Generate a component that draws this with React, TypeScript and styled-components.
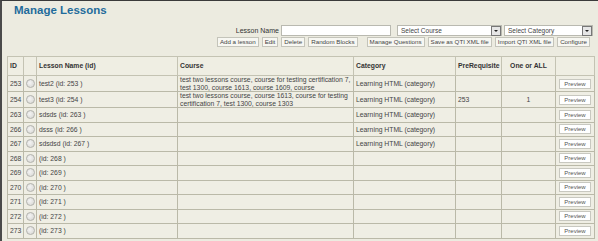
import styled, { createGlobalStyle } from "styled-components";

const Global = createGlobalStyle`
  html, body { margin: 0; padding: 0; background: #ecebe0; }
  body { font-family: "Liberation Sans", Arial, sans-serif; color: #333; }
`;

const Page = styled.div`
  height: 241px;
  box-sizing: border-box;
  border-top: 1px solid #3a3a3a;
  border-left: 2px solid #4a4a4a;
  padding: 0 5px 0 5px;
  overflow: hidden;
`;

const Title = styled.h1`
  margin: 2px 0 0 7px;
  font-size: 11.5px;
  line-height: 15px;
  font-weight: bold;
  color: #1f6b9b;
`;

const Toolbar = styled.div`
  display: flex;
  flex-direction: column;
  align-items: flex-end;
  gap: 1px;
  margin-top: 7px;
`;

const FilterRow = styled.div`
  display: flex;
  align-items: center;
  gap: 2px;
  font-size: 7px;
`;

const Label = styled.span`
  color: #333;
`;

const TextInput = styled.div`
  width: 108px;
  height: 9px;
  background: #fff;
  border: 1px solid #b9b9b0;
`;

const Select = styled.div<{ $w: number; $gap: number }>`
  width: ${(p) => p.$w}px;
  height: 9px;
  background: #fff;
  border: 1px solid #b9b9b0;
  display: flex;
  align-items: center;
  justify-content: space-between;
  padding-left: 3px;
  font-size: 6.5px;
  color: #444;
  margin-left: ${(p) => p.$gap}px;
`;

const Arrow = styled.span`
  width: 8px;
  height: 8px;
  border: 1px solid #777;
  background: #e6e6e6;
  display: flex;
  align-items: center;
  justify-content: center;
  &::after {
    content: "";
    border-left: 2px solid transparent;
    border-right: 2px solid transparent;
    border-top: 2px solid #222;
  }
`;

const ButtonRow = styled.div`
  display: flex;
  gap: 3px;
  margin-right: 3px;
`;

const Group = styled.div`
  display: flex;
  gap: 3px;
  margin-left: 6px;
`;

const Btn = styled.button`
  font-family: inherit;
  font-size: 6.2px;
  line-height: 8px;
  height: 10px;
  padding: 0 2px;
  background: #f7f7f2;
  border: 1px solid #c4c4ba;
  color: #444;
  white-space: nowrap;
`;

const Table = styled.table`
  margin-top: 9px;
  width: 587px;
  border-collapse: collapse;
  font-size: 6.8px;
  line-height: 7.5px;
  table-layout: fixed;
`;

const Col = styled.col<{ $w: number }>`
  width: ${(p) => p.$w}px;
`;

const Th = styled.th<{ $center?: boolean }>`
  height: 18px;
  text-align: ${(p) => (p.$center ? "center" : "left")};
  font-weight: bold;
  color: #333;
  border: 1px solid #c4c3b3;
  padding: 0 2px;
  background: #efeee3;
  white-space: nowrap;
  overflow: hidden;
`;

const Row = styled.tr<{ $h: number }>`
  height: ${(p) => p.$h}px;
`;

const Td = styled.td<{ $center?: boolean; $right?: boolean }>`
  border: 1px solid #bab9a8;
  padding: 0 2px;
  color: #444;
  text-align: ${(p) => (p.$center ? "center" : p.$right ? "right" : "left")};
  background: #efeee4;
  overflow: hidden;
  white-space: nowrap;
`;

const Wrap = styled.div`
  white-space: normal;
`;

const Radio = styled.span`
  display: inline-block;
  width: 7px;
  height: 7px;
  border-radius: 50%;
  border: 1px solid #b3b3ad;
  background: radial-gradient(circle at 40% 40%, #f4f4f4, #d4d4d0);
  vertical-align: middle;
`;

const Preview = styled.button`
  font-family: inherit;
  font-size: 6px;
  height: 10px;
  width: 32px;
  padding: 0;
  background: #fff;
  border: 1px solid #c8c8c0;
  color: #555;
`;

type Lesson = {
  id: number;
  name: string;
  course?: string;
  category?: string;
  pre?: string;
  one?: string;
  h: number;
};

const lessons: Lesson[] = [
  { id: 253, name: "test2", course: "test two lessons course, course for testing certification 7, test 1300, course 1613, course 1609, course", category: "Learning HTML (category)", h: 16 },
  { id: 254, name: "test3", course: "test two lessons course, course 1613, course for testing certification 7, test 1300, course 1303", category: "Learning HTML (category)", pre: "253", one: "1", h: 16 },
  { id: 263, name: "sdsds", category: "Learning HTML (category)", h: 14.5 },
  { id: 266, name: "dsss", category: "Learning HTML (category)", h: 14.5 },
  { id: 267, name: "sdsdsd", category: "Learning HTML (category)", h: 14.5 },
  { id: 268, name: "", h: 14.5 },
  { id: 269, name: "", h: 14.5 },
  { id: 270, name: "", h: 14.5 },
  { id: 271, name: "", h: 14.5 },
  { id: 272, name: "", h: 14.5 },
  { id: 273, name: "", h: 14.5 },
];

const cols = [16, 13, 141, 176, 102, 46, 54, 39];

export default function App() {
  return (
    <>
      <Global />
      <Page>
        <Title>Manage Lessons</Title>
        <Toolbar>
          <FilterRow>
            <Label>Lesson Name</Label>
            <TextInput />
            <Select $w={100} $gap={4}>
              Select Course
              <Arrow />
            </Select>
            <Select $w={84} $gap={0}>
              Select Category
              <Arrow />
            </Select>
          </FilterRow>
          <ButtonRow>
            <Btn>Add a lesson</Btn>
            <Btn>Edit</Btn>
            <Btn>Delete</Btn>
            <Btn>Random Blocks</Btn>
            <Group>
              <Btn>Manage Questions</Btn>
              <Btn>Save as QTI XML file</Btn>
              <Btn>Import QTI XML file</Btn>
              <Btn>Configure</Btn>
            </Group>
          </ButtonRow>
        </Toolbar>
        <Table>
          <colgroup>
            {cols.map((w, i) => (
              <Col key={i} $w={w} />
            ))}
          </colgroup>
          <thead>
            <tr>
              <Th>ID</Th>
              <Th></Th>
              <Th>Lesson Name (id)</Th>
              <Th>Course</Th>
              <Th>Category</Th>
              <Th>PreRequisite</Th>
              <Th $center>One or ALL</Th>
              <Th></Th>
            </tr>
          </thead>
          <tbody>
            {lessons.map((l) => (
              <Row key={l.id} $h={l.h}>
                <Td $right>{l.id}</Td>
                <Td $center>
                  <Radio />
                </Td>
                <Td>
                  {l.name ? `${l.name} ` : ""}(id: {l.id} )
                </Td>
                <Td>
                  <Wrap>{l.course}</Wrap>
                </Td>
                <Td>{l.category}</Td>
                <Td>{l.pre}</Td>
                <Td $center>{l.one}</Td>
                <Td $center>
                  <Preview>Preview</Preview>
                </Td>
              </Row>
            ))}
          </tbody>
        </Table>
      </Page>
    </>
  );
}
